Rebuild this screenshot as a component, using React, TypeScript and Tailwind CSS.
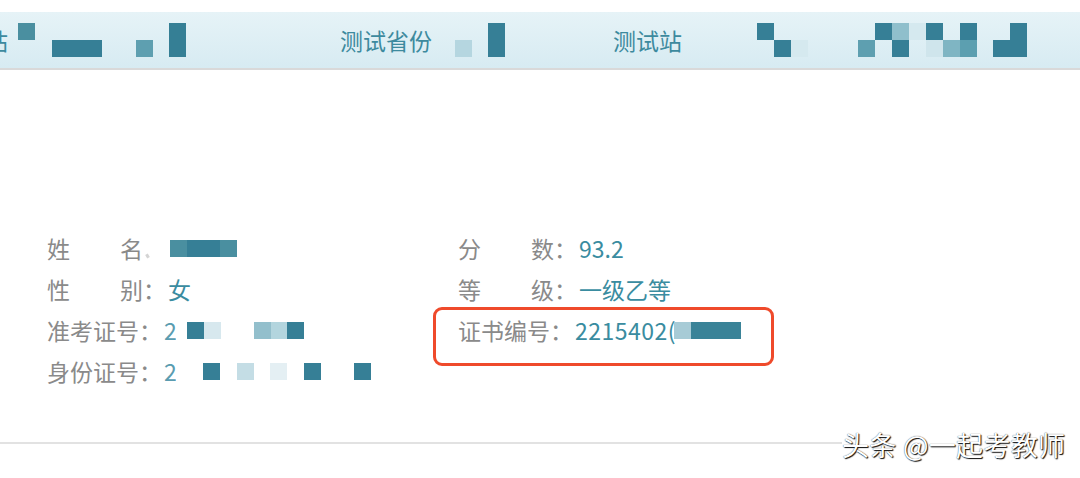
import React from "react";

type R = [number, number, number, number, string];

function Mosaic({ w, h, rects }: { w: number; h: number; rects: R[] }) {
  return (
    <svg width={w} height={h} viewBox={`0 0 ${w} ${h}`} className="block shrink-0">
      {rects.map(([x, y, rw, rh, c], i) => (
        <rect key={i} x={x} y={y} width={rw} height={rh} fill={c} />
      ))}
    </svg>
  );
}

const D = "#367f96";

function Label2({ a, b }: { a: string; b: string }) {
  return (
    <span className="flex w-[96px] justify-between text-[#8a8a8a]">
      <span>{a}</span>
      <span>{b}</span>
    </span>
  );
}

function Label4({ t }: { t: string }) {
  return <span className="text-[#8a8a8a]">{t}</span>;
}

function Colon() {
  return <span className="w-[25px] text-[#8a8a8a]">：</span>;
}

function Row({ children }: { children: React.ReactNode }) {
  return <div className="flex h-[41px] items-center">{children}</div>;
}

export default function App() {
  return (
    <div
      className="relative h-[478px] w-[1080px] overflow-hidden bg-white"
      style={{ fontFamily: '"Noto Sans CJK SC", "Noto Sans", sans-serif' }}
    >
      {/* header bar */}
      <div className="mt-[12px] flex h-[58px] items-center overflow-hidden border-b-2 border-[#d9d9d9] bg-gradient-to-b from-[#e6f3f7] to-[#d7ebf2] text-[23px] leading-none text-[#3d8a9e]">
        <span className="ml-[-15px] w-[23px] shrink-0">站</span>
        <span className="ml-[10px]">
          <Mosaic
            w={168}
            h={34}
            rects={[
              [0, 0, 17, 17, "#4a8fa0"],
              [34, 17, 50, 17, D],
              [118, 17, 17, 17, "#5e9fb0"],
              [151, 0, 17, 34, "#357f95"],
            ]}
          />
        </span>
        <span className="ml-[154px] w-[92px] shrink-0">测试省份</span>
        <span className="ml-[23px]">
          <Mosaic
            w={50}
            h={34}
            rects={[
              [0, 17, 17, 17, "#b5d6e0"],
              [33, 0, 17, 34, D],
            ]}
          />
        </span>
        <span className="ml-[108px] w-[69px] shrink-0">测试站</span>
        <span className="ml-[75px]">
          <Mosaic
            w={51}
            h={34}
            rects={[
              [0, 0, 17, 17, D],
              [17, 17, 17, 17, D],
              [34, 17, 17, 17, "#d5e9ef"],
            ]}
          />
        </span>
        <span className="ml-[50px]">
          <Mosaic
            w={169}
            h={34}
            rects={[
              [0, 17, 17, 17, "#5e9fb0"],
              [17, 0, 17, 17, D],
              [34, 0, 17, 17, "#8fbfcc"],
              [34, 17, 17, 17, D],
              [51, 0, 17, 17, "#d5e9ef"],
              [68, 0, 17, 17, D],
              [68, 17, 17, 17, "#cfe5ec"],
              [85, 17, 17, 17, "#7fb5c3"],
              [102, 0, 17, 17, D],
              [102, 17, 17, 17, "#5c9fb0"],
              [135, 17, 34, 17, D],
              [152, 0, 17, 17, D],
            ]}
          />
        </span>
      </div>

      {/* info block */}
      <div className="mt-[158px] flex text-[23px] leading-[41px] text-[#3a8ca0]">
        <div className="ml-[47px] flex w-[411px] flex-col">
          <Row>
            <Label2 a="姓" b="名" />
            <span className="flex w-[25px] items-end self-stretch pb-[11px] pl-[3px]">
              <span className="block h-[4px] w-[3px] rotate-[-30deg] bg-[#d4d4d4]" />
            </span>
            <span className="ml-[2px]">
              <Mosaic
                w={67}
                h={17}
                rects={[
                  [0, 0, 17, 17, "#4a8fa0"],
                  [17, 0, 33, 17, D],
                  [50, 0, 17, 17, "#4a8fa0"],
                ]}
              />
            </span>
          </Row>
          <Row>
            <Label2 a="性" b="别" />
            <Colon />
            <span>女</span>
          </Row>
          <Row>
            <Label4 t="准考证号" />
            <Colon />
            <span className="w-[12px] overflow-hidden text-[#5a9cb0]">2</span>
            <span className="ml-[11px]">
              <Mosaic
                w={117}
                h={17}
                rects={[
                  [0, 0, 17, 17, D],
                  [17, 0, 17, 17, "#d7e8ee"],
                  [67, 0, 17, 17, "#93bfcc"],
                  [84, 0, 17, 17, "#b3d5de"],
                  [100, 0, 17, 17, D],
                ]}
              />
            </span>
          </Row>
          <Row>
            <Label4 t="身份证号" />
            <Colon />
            <span className="w-[12px] overflow-hidden text-[#5a9cb0]">2</span>
            <span className="ml-[27px]">
              <Mosaic
                w={168}
                h={17}
                rects={[
                  [0, 0, 17, 17, D],
                  [34, 0, 17, 17, "#c4dde5"],
                  [67, 0, 17, 17, "#e4eff3"],
                  [101, 0, 17, 17, D],
                  [151, 0, 17, 17, D],
                ]}
              />
            </span>
          </Row>
        </div>
        <div className="flex flex-col">
          <Row>
            <Label2 a="分" b="数" />
            <Colon />
            <span>93.2</span>
          </Row>
          <Row>
            <Label2 a="等" b="级" />
            <Colon />
            <span>一级乙等</span>
          </Row>
          <Row>
            <Label4 t="证书编号" />
            <Colon />
            <span className="tracking-[0.5px]">2215402(</span>
            <span className="ml-[-2px]">
              <Mosaic
                w={67}
                h={17}
                rects={[
                  [0, 0, 17, 17, "#a7cbd6"],
                  [17, 0, 50, 17, "#3a8398"],
                ]}
              />
            </span>
          </Row>
        </div>
      </div>

      {/* red annotation */}
      <div className="absolute left-[433px] top-[307px] h-[59px] w-[341px] rounded-[9px] border-[3px] border-[#ef4a2b]" />

      {/* bottom rule + watermark */}
      <div className="mt-[38px] flex items-start">
        <div className="mt-[12px] h-[2px] w-[842px] bg-[#e2e2e2]" />
        <span className="ml-[0px] whitespace-nowrap text-[27px] leading-[30px] tracking-[0.3px] text-white [text-shadow:1px_1px_1px_rgba(0,0,0,0.95),0_0_1px_rgba(0,0,0,0.8)]">
          头条 @一起考教师
        </span>
      </div>
    </div>
  );
}
